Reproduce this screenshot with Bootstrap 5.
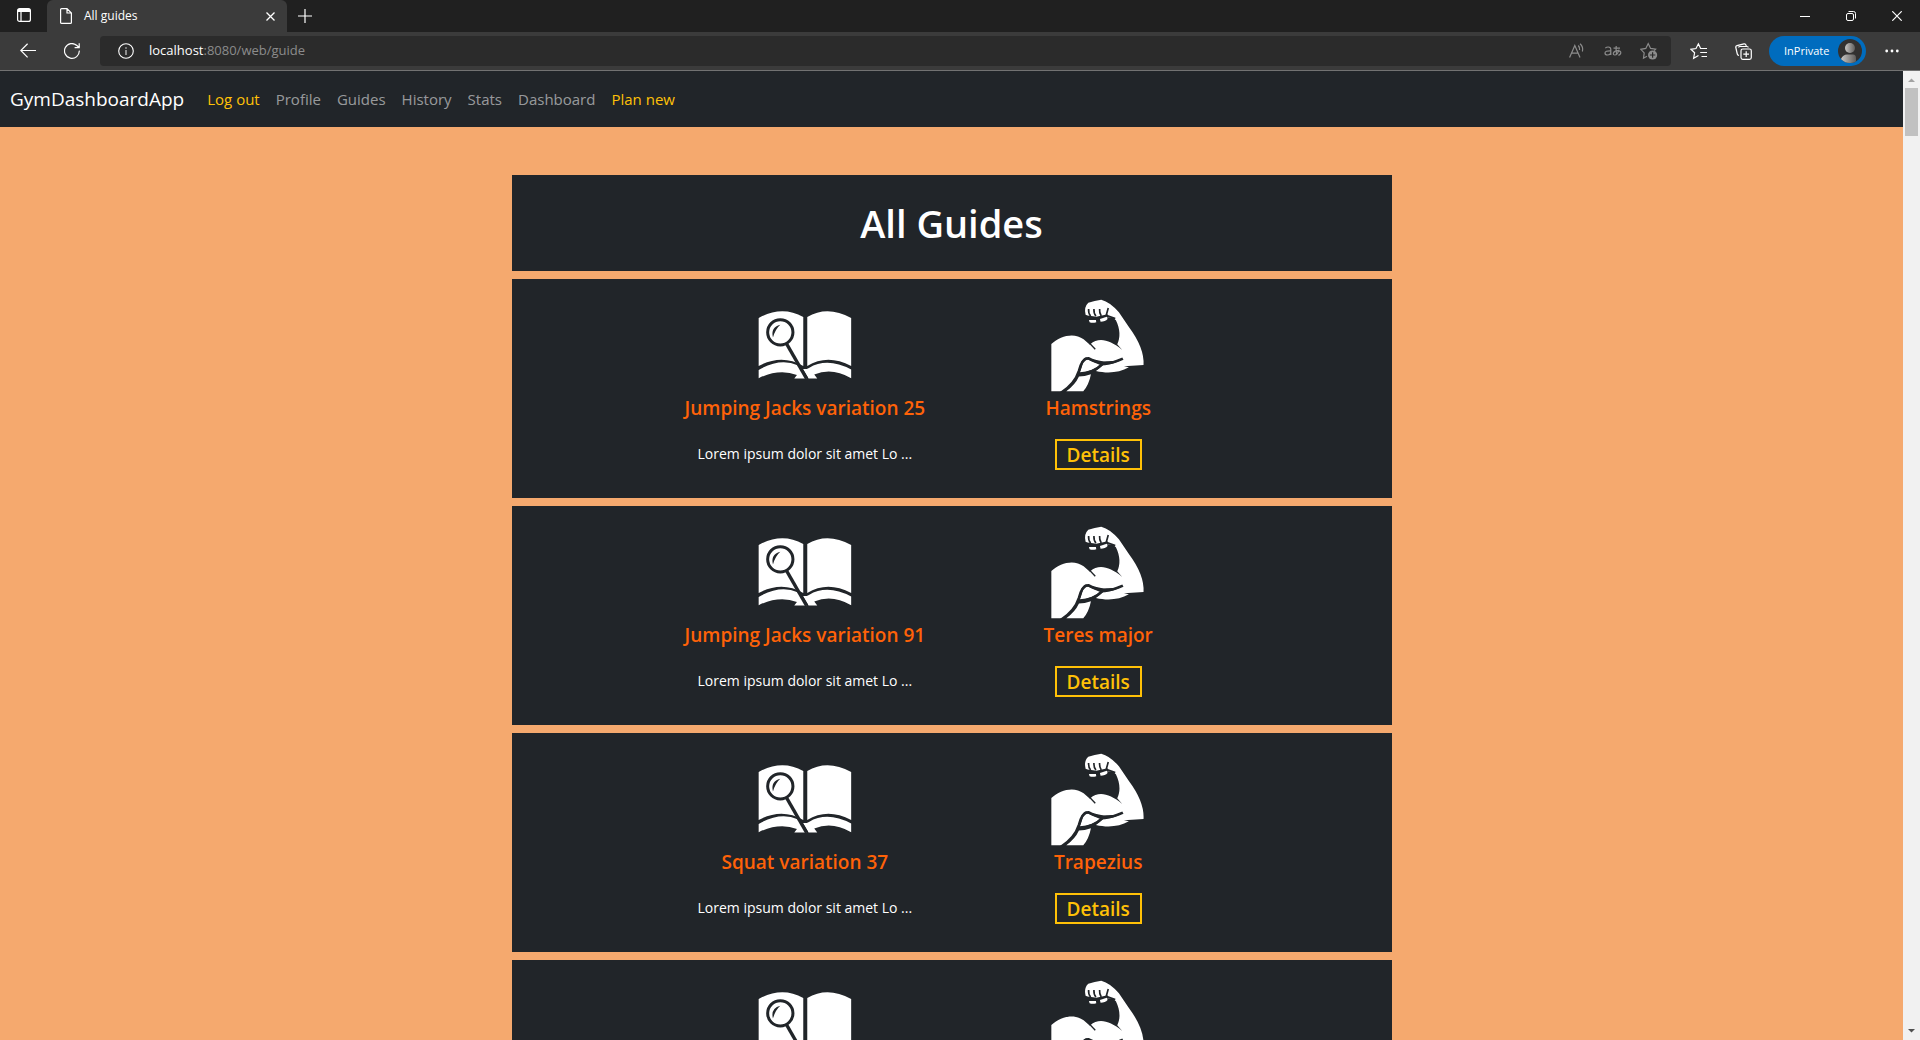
<!DOCTYPE html>
<html lang="en">
<head>
<meta charset="utf-8">
<meta name="viewport" content="width=device-width, initial-scale=1">
<title>All guides</title>
<link href="https://cdn.jsdelivr.net/npm/bootstrap@5.3.0/dist/css/bootstrap.min.css" rel="stylesheet">
<style>
  body { font-family: "Open Sans", "Noto Sans CJK JP", sans-serif; background: #f5a96e; }
  svg { display: block; }

  /* browser frame */
  .tabstrip { background: #202020; height: 32px; color: #fff; }
  .toolbar { background: #3b3b3b; height: 39px; border-bottom: 1px solid #727272; padding: 4px 10px; color: #fff; }
  .chrome-btn { border: 0; background: none; color: inherit; padding: 0; width: 36px; height: 30px; display: flex; align-items: center; justify-content: center; }
  .strip-btn { width: 47px; }
  .window-btn { width: 46px; }
  .close-btn { width: 16px; }
  .page-tab { width: 240px; background: #3b3b3b; border-radius: 6px 6px 0 0; padding: 0 9px 0 13px; font-size: 12px; }
  .address { background: #2b2b2b; border-radius: 4px; margin: 0 2px; padding: 0 4px 0 8px; font-size: 13px; }
  .address-text { padding-left: 5px; }
  .address-path { color: #8c8c8c; }
  .address-tools { color: #8c8c8c; }
  .private-pill { border: 0; background: #006cbe; color: #fff; border-radius: 15px; width: 97px; height: 30px; font-size: 11px; padding: 0 4px 0 15px; }

  /* page */
  .site-nav { height: 56px; padding: 0 10px; }
  .site-nav .navbar-brand { font-size: 19px; margin-right: 15px; }
  .site-nav .nav-link { font-size: 15px; }
  .guide-list { padding-top: 48px; }
  .heading-box { padding: 23px 0; }
  .heading-box h1 { font-size: 38px; line-height: 50px; font-weight: 600; }
  .guide { padding: 20px 0 28px; margin-top: 8px; }
  .guide-icon { width: 32%; aspect-ratio: 1; fill: #fff; margin: 0 auto 3px; }
  .guide-name { color: #ff6208; font-size: 19px; line-height: 24px; font-weight: 600; margin-bottom: 19px; }
  .guide-text { font-size: 14px; line-height: 24px; margin: 0; padding-top: 3px; }
  .btn-details { display: inline-block; border: 2px solid #ffc107; color: #ffc107; font-size: 19px; line-height: 25px; font-weight: 600; padding: 2px 10px 0; text-decoration: none; vertical-align: top; }
  .scroll-track { width: 17px; background: #f1f1f1; padding: 7px 2px; }
  .scroll-thumb { height: 48px; background: #c1c1c1; margin-top: 5px; }
  .ink { stroke: #212529; fill: none; }
</style>
<script src="https://cdn.jsdelivr.net/npm/bootstrap@5.3.0/dist/js/bootstrap.bundle.min.js"></script>
</head>
<body class="vh-100 d-flex flex-column overflow-hidden">

<svg width="0" height="0" class="position-absolute" aria-hidden="true">
  <symbol id="book" viewBox="53 27 282 282">
    <path d="M55 84Q125 45 189 81V228Q125 191 55 228Z"/>
    <path d="M201 81Q262 45 333 84V228Q262 191 201 228Z"/>
    <path d="M55 240Q120 203 172 226L184 240L190 250L199 266H162L170 255Q116 235 55 265Z"/>
    <path d="M188 237Q197 239 206 234Q262 201 333 239V265Q275 231 222 254L231 266H205Z"/>
    <circle class="ink" cx="120" cy="127" r="38" stroke-width="9"/>
    <path d="M98 143Q90 112 120 104Q104 118 98 143Z" fill="#212529"/>
    <path class="ink" d="M139 162L199 266" stroke-width="10"/>
  </symbol>
  <symbol id="biceps" viewBox="33 27 282 282">
    <path d="M34 162C62 136 104 127 131 148L166 179Q145 170 151 163C176 141 208 148 247 180L232 163C242 143 241 118 228 91L220 84L208 82L152 83L137 74Q131 51 145 38Q164 32 184 29Q211 36 237 67L267 111Q314 174 311 225L252 229L267 232C238 249 202 251 168 243L187 227C210 224 232 219 247 207Q221 216 199 214Q183 219 147 204Q133 197 124 217L113 252Q100 282 67 304H34Z"/>
    <path d="M120 247C128 231 126 210 145 209Q159 218 181 225Q159 244 120 247Z"/>
    <path d="M117 260Q134 260 153 253Q147 285 130 304H79Q105 286 117 260Z"/>
    <path class="ink" d="M62 310Q105 282 117 243Q126 206 145 205Q165 216 199 220Q225 218 249 206" stroke-width="8"/>
    <path class="ink" d="M187 223Q160 250 114 254" stroke-width="8"/>
    <path class="ink" d="M146 57Q145 70 152 78M162 57Q161 70 168 78M179 57Q178 69 184 78M205 54L199 76L226 86" stroke-width="5"/>
    <path class="ink" d="M136 80L170 84L204 77" stroke-width="8"/>
    <path class="ink" d="M149 160L166 178" stroke-width="4"/>
    <path d="M147 90L168 90L169 97Q158 100 149 97ZM180 87L201 80L203 87Q196 95 182 95Z"/>
  </symbol>
</svg>

<header>
  <div class="tabstrip d-flex">
    <button class="chrome-btn strip-btn" aria-label="Tab actions">
      <svg width="14" height="14" viewBox="0 0 14 14" fill="none" stroke="currentColor" stroke-width="1.2"><rect x=".6" y=".6" width="12.8" height="12.8" rx="2"/><path d="M1 2.5H13" stroke-width="3"/><path d="M4 3V13"/></svg>
    </button>
    <div class="page-tab d-flex align-items-center">
      <svg width="12" height="18" viewBox="0 0 12 18" fill="none" stroke="currentColor" stroke-width="1.2"><path d="M2 1.6H7L11.4 6V15.4Q11.4 16.4 10.4 16.4H1.6Q.6 16.4 .6 15.4V2.6Q.6 1.6 1.6 1.6ZM7 1.6V6H11.4"/></svg>
      <span class="flex-grow-1 ms-2 ps-1">All guides</span>
      <button class="chrome-btn close-btn" aria-label="Close tab">
        <svg width="9" height="9" viewBox="0 0 9 9" stroke="currentColor" stroke-width="1.3"><path d="M.5 .5L8.5 8.5M8.5 .5L.5 8.5"/></svg>
      </button>
    </div>
    <button class="chrome-btn h-100" aria-label="New tab">
      <svg width="14" height="14" viewBox="0 0 14 14" stroke="currentColor"><path d="M7 0V14M0 7H14" stroke-width="1.2"/></svg>
    </button>
    <div class="d-flex ms-auto">
      <button class="chrome-btn window-btn h-100" aria-label="Minimize"><svg width="10" height="10" viewBox="0 0 10 10" stroke="currentColor"><path d="M0 5.5H10"/></svg></button>
      <button class="chrome-btn window-btn h-100" aria-label="Restore"><svg width="10" height="10" viewBox="0 0 10 10" fill="none" stroke="currentColor"><rect x=".5" y="2.5" width="7" height="7" rx="1.5"/><path d="M2.5 .5H7.5Q9.5 .5 9.5 2.5V7.5"/></svg></button>
      <button class="chrome-btn window-btn h-100" aria-label="Close"><svg width="10" height="10" viewBox="0 0 10 10" stroke="currentColor" stroke-width="1.2"><path d="M.3 .3L9.7 9.7M9.7 .3L.3 9.7"/></svg></button>
    </div>
  </div>

  <div class="toolbar d-flex gap-2">
    <button class="chrome-btn" aria-label="Back"><svg width="16" height="16" viewBox="0 0 16 16" fill="none" stroke="currentColor" stroke-width="1.2"><path d="M16 7.5H.8M7.6 .8L.8 7.5L7.6 14.3"/></svg></button>
    <button class="chrome-btn" aria-label="Refresh"><svg width="16" height="16" viewBox="0 0 16 16" fill="none" stroke="currentColor" stroke-width="1.2"><path d="M15.3 7.6A7.4 7.4 0 1 1 12.9 2.5L15 4.5M15.2 .3V4.7H10.6"/></svg></button>
    <div class="address d-flex align-items-center flex-grow-1">
      <button class="chrome-btn" aria-label="Site information"><svg width="16" height="16" viewBox="0 0 16 16" fill="none" stroke="currentColor" stroke-width="1.1"><circle cx="8" cy="8" r="7.3"/><path d="M8 7V12M8 4.2V5.7" stroke-width="1.4" stroke="#bbb"/></svg></button>
      <span class="address-text flex-grow-1">localhost<span class="address-path">:8080/web/guide</span></span>
      <div class="address-tools d-flex">
        <button class="chrome-btn" aria-label="Read aloud"><svg width="16" height="16" viewBox="0 0 16 16" fill="none" stroke="currentColor" stroke-width="1.2"><path d="M.6 14.5L5.8 2.5L11 14.5M2.3 10.2H9.3M9.3 2.5Q11 4.5 10.6 7M11 .8Q14.6 4 13.4 8.5"/></svg></button>
        <button class="chrome-btn" aria-label="Translate"><svg width="18" height="14" viewBox="0 0 18 14" fill="none" stroke="currentColor" stroke-width="1.2"><path d="M1.3 4.2Q2.5 3 4.2 3Q6.8 3 6.8 5.5V11M6.800 6.8Q1 6.6 1 9Q1 11 3.4 11Q6.8 11 6.8 8M9.5 4.2H16M12.2 2Q11.8 6 12.6 10.7M15 5.6Q13.6 11 10.8 11Q9 11 9.4 9Q10.4 6.6 13.6 6.6Q17 6.8 16.8 9Q16.4 10.8 14.4 11.4"/></svg></button>
        <button class="chrome-btn" aria-label="Add to favorites"><svg width="18" height="18" viewBox="0 0 18 18" fill="none" stroke="currentColor" stroke-width="1.2"><path d="M7 14.3L3.5 16.2L4.2 10.9L.8 7.3L5.8 6.4L8.2 1.6L10.6 6.4L15.6 7.2L14.2 8.6"/><circle cx="12.6" cy="13" r="4.6" fill="currentColor" stroke="none"/><path d="M12.6 10.3V15.7M9.9 13H15.3" stroke="#2b2b2b"/></svg></button>
      </div>
    </div>
    <button class="chrome-btn" aria-label="Favorites"><svg width="18" height="18" viewBox="0 0 18 18" fill="none" stroke="currentColor" stroke-width="1.2"><path d="M8.5 13.5L3.6 16.3L4.6 10.8L1 7.3L6 6.5L8.4 1.8L10.6 6.5H17M10.2 10.5H17M11.5 14.5H17"/></svg></button>
    <button class="chrome-btn" aria-label="Collections"><svg width="17" height="17" viewBox="0 0 17 17" fill="none" stroke="currentColor" stroke-width="1.2"><rect x="6" y="6" width="10.3" height="10.3" rx="1.8"/><path d="M11.2 8.3V14M8.3 11.2H14M4 12.5Q2.600 12.200 2.300 11L.8 4.500Q.5 3 2 2.600L9 .9Q10.600 .6 11 2.200L11.300 3.500M3.500 4.500Q3.700 3.500 5 3.500H12Q13.300 3.500 13.300 4.500"/></svg></button>
    <button class="private-pill d-flex align-items-center justify-content-between">InPrivate
      <svg width="24" height="24" viewBox="0 0 24 24"><defs><linearGradient id="silver"><stop stop-color="#c8c6c4"/><stop offset="1" stop-color="#605e5c"/></linearGradient><clipPath id="disc"><circle cx="12" cy="12" r="12"/></clipPath></defs><circle cx="12" cy="12" r="12" fill="#323130"/><circle cx="12" cy="9" r="5" fill="url(#silver)"/><path clip-path="url(#disc)" d="M3 24V20Q5 15.500 9 15.500H15Q18 15.500 18 19V24Z" fill="url(#silver)"/></svg>
    </button>
    <button class="chrome-btn" aria-label="Settings and more"><svg width="14" height="4" viewBox="0 0 14 4" fill="currentColor"><circle cx="1.700" cy="2" r="1.400"/><circle cx="7" cy="2" r="1.400"/><circle cx="12.300" cy="2" r="1.400"/></svg></button>
  </div>
</header>

<div class="d-flex flex-grow-1 overflow-hidden">
  <div class="flex-grow-1 overflow-hidden">
    <nav class="site-nav navbar navbar-expand navbar-dark bg-dark">
      <a class="navbar-brand" href="#">GymDashboardApp</a>
      <ul class="navbar-nav">
        <li class="nav-item"><a class="nav-link text-warning" href="#">Log out</a></li>
        <li class="nav-item"><a class="nav-link" href="#">Profile</a></li>
        <li class="nav-item"><a class="nav-link" href="#">Guides</a></li>
        <li class="nav-item"><a class="nav-link" href="#">History</a></li>
        <li class="nav-item"><a class="nav-link" href="#">Stats</a></li>
        <li class="nav-item"><a class="nav-link" href="#">Dashboard</a></li>
        <li class="nav-item"><a class="nav-link text-warning" href="#">Plan new</a></li>
      </ul>
    </nav>

    <main class="guide-list container">
      <div class="row justify-content-center">
        <div class="col-8 px-0 text-center text-white">
          <div class="heading-box bg-dark"><h1 class="mb-0">All Guides</h1></div>

          <article class="guide bg-dark row gx-0 justify-content-center">
            <div class="col-4">
              <svg class="guide-icon"><use href="#book"/></svg>
              <h5 class="guide-name">Jumping Jacks variation 25</h5>
              <p class="guide-text">Lorem ipsum dolor sit amet Lo ...</p>
            </div>
            <div class="col-4">
              <svg class="guide-icon"><use href="#biceps"/></svg>
              <h5 class="guide-name">Hamstrings</h5>
              <a class="btn-details" href="#">Details</a>
            </div>
          </article>

          <article class="guide bg-dark row gx-0 justify-content-center">
            <div class="col-4">
              <svg class="guide-icon"><use href="#book"/></svg>
              <h5 class="guide-name">Jumping Jacks variation 91</h5>
              <p class="guide-text">Lorem ipsum dolor sit amet Lo ...</p>
            </div>
            <div class="col-4">
              <svg class="guide-icon"><use href="#biceps"/></svg>
              <h5 class="guide-name">Teres major</h5>
              <a class="btn-details" href="#">Details</a>
            </div>
          </article>

          <article class="guide bg-dark row gx-0 justify-content-center">
            <div class="col-4">
              <svg class="guide-icon"><use href="#book"/></svg>
              <h5 class="guide-name">Squat variation 37</h5>
              <p class="guide-text">Lorem ipsum dolor sit amet Lo ...</p>
            </div>
            <div class="col-4">
              <svg class="guide-icon"><use href="#biceps"/></svg>
              <h5 class="guide-name">Trapezius</h5>
              <a class="btn-details" href="#">Details</a>
            </div>
          </article>

          <article class="guide bg-dark row gx-0 justify-content-center">
            <div class="col-4"><svg class="guide-icon"><use href="#book"/></svg></div>
            <div class="col-4"><svg class="guide-icon"><use href="#biceps"/></svg></div>
          </article>
        </div>
      </div>
    </main>
  </div>

  <div class="scroll-track d-flex flex-column flex-shrink-0">
    <svg class="mx-auto" width="7" height="5" viewBox="0 0 7 5" fill="#a3a3a3"><path d="M0 4L3.500 .5L7 4Z"/></svg>
    <div class="scroll-thumb"></div>
    <svg class="mx-auto mt-auto" width="7" height="5" viewBox="0 0 7 5" fill="#505050"><path d="M0 1L3.500 4.500L7 1Z"/></svg>
  </div>
</div>
</body>
</html>
